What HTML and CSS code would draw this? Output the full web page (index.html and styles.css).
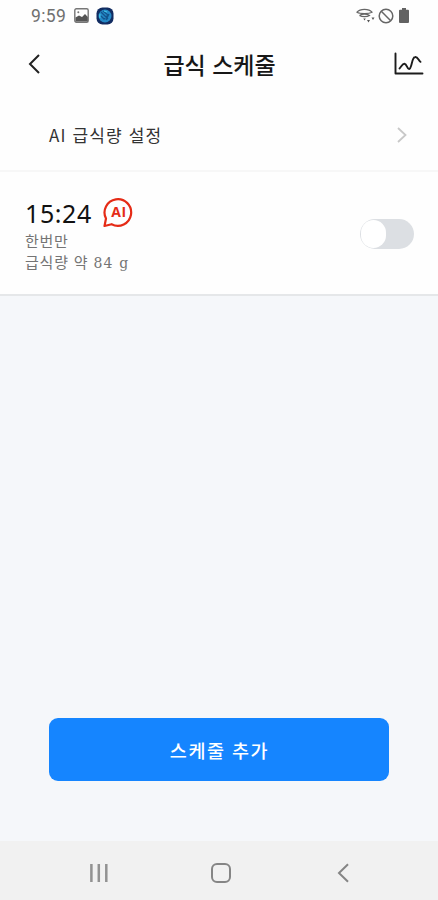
FILE: index.html
```html
<!DOCTYPE html>
<html lang="ko">
<head>
<meta charset="utf-8">
<title>급식 스케줄</title>
<link rel="stylesheet" href="styles.css">
</head>
<body>
<div class="screen">
  <div class="status">
    <span class="clock">9:59</span>
    <svg class="st-photo" width="15" height="15" viewBox="0 0 15 15"><rect x=".8" y=".8" width="13.4" height="13.4" rx="1.5" fill="#fff" stroke="#777" stroke-width="1.4"/><path d="M1.500 13.500V9.500L5 7.500 8 9l3-3 2.800 3v4.500z" fill="#555"/><circle cx="4.300" cy="4.300" r="1" fill="#777"/></svg>
    <svg class="st-app" width="18" height="18" viewBox="0 0 18 18"><rect x=".5" y=".5" width="17" height="17" rx="6" fill="#122c61"/><circle cx="9" cy="9" r="6.500" fill="#2488c6"/><path d="M5 5l7 7M7 4l5 4-4 4-3-3M13 7l-3 6" fill="none" stroke="#12548d" stroke-width="1.300"/><path d="M4 11a5.500 5.500 0 0 1 0-4M8 4l3 1" fill="none" stroke="#42c4e5" stroke-width="1.300"/></svg>
    <span class="grow"></span>
    <svg class="st-wifi" width="20" height="16" viewBox="0 0 20 16" fill="none" stroke="#666" stroke-width="1.200"><path d="M1 4.200C4 .5 13 .5 16 4.200C13 6 4 6 1 4.200zM3.500 7.500c2.500-1.800 7.500-1.800 10 0c-2.500 1.500-7.500 1.500-10 0"/><path d="M7.300 10.500h2.500L8.500 12.500zM11 12l1.500 2.500 1.500-2.500zM15.500 9.500l1.500 2.500 1.500-2.500z" fill="#555" stroke="none"/></svg>
    <svg class="st-block" width="16" height="16" viewBox="0 0 16 16" fill="none" stroke="#666" stroke-width="1.500"><circle cx="8" cy="8" r="6.800"/><path d="M3.300 3.300l9.400 9.400"/></svg>
    <svg class="st-battery" width="10" height="15" viewBox="0 0 10 15"><path d="M3 0h4v1.700h2q1 0 1 1V14q0 1-1 1H1q-1 0-1-1V2.700q0-1 1-1h2z" fill="#626262"/></svg>
  </div>
  <header class="header">
    <svg width="12" height="20" viewBox="0 0 12 20" fill="none" stroke="#222" stroke-width="2"><path d="M11 1L2 10l9 9"/></svg>
    <h1 class="title">급식 스케줄</h1>
    <svg width="30" height="23" viewBox="0 0 30 23" fill="none" stroke="#1c1c1c" stroke-width="1.900" stroke-linecap="round" stroke-linejoin="round"><path d="M1.500 1.500V21.500H28.500"/><path d="M5.500 16.500C7 15.200 8.500 11.500 10.500 11.700C13 12 13 17 15 17C18 17 17.500 5.500 21 5C24 4.500 24.500 9 26.500 9.800"/></svg>
  </header>
  <div class="setting">
    <span class="setting-label">AI 급식량 설정</span>
    <svg width="10" height="16" viewBox="0 0 10 16" fill="none" stroke="#c8c8c8" stroke-width="1.800"><path d="M1 1l7.500 7L1 15"/></svg>
  </div>
  <section class="schedule">
    <div>
      <div class="time-row">
        <span class="time">15:24</span>
        <span class="badge"><svg class="bubble" width="30" height="30" viewBox="0 0 30 30" fill="none" stroke="#e52b16" stroke-width="2.200" stroke-linejoin="round"><path d="M3 20.500A13.300 13.300 0 1 1 8.600 26.200L1.500 28z"/></svg><span class="badge-text">AI</span></span>
      </div>
      <div class="repeat">한번만</div>
      <div class="amount">급식량 약 <span class="latin">84 g</span></div>
    </div>
    <span class="toggle"><span class="knob"></span></span>
  </section>
  <main class="content"><button class="add">스케줄 추가</button></main>
  <nav class="nav">
    <svg width="20" height="20" viewBox="0 0 20 20" stroke="#929292" stroke-width="2.500"><path d="M2.400 1v18M9.800 1v18M17.300 1v18"/></svg>
    <svg class="home" width="20" height="20" viewBox="0 0 20 20" fill="none" stroke="#858585" stroke-width="2"><rect x="1" y="1" width="18" height="18" rx="5"/></svg>
    <svg width="12" height="20" viewBox="0 0 12 20" fill="none" stroke="#858585" stroke-width="2"><path d="M11 1.200L2 10l9 8.800"/></svg>
  </nav>
</div>
</body>
</html>
```
FILE: styles.css
```css
* { box-sizing: border-box; }
body { margin: 0; font-family: "Noto Sans CJK KR", sans-serif; background: #fff; }
svg { display: block; flex: none; }
.screen { width: 438px; height: 900px; display: flex; flex-direction: column; background: #fefefe; overflow: hidden; }
.status { height: 30px; padding: 1px 29px 0 31px; display: flex; align-items: center; }
.clock { width: 36px; font: 17.500px/20px Roboto, sans-serif; color: #707070; letter-spacing: .4px; white-space: nowrap; }
.st-photo { margin-left: 7px; }
.st-app { margin-left: 7px; }
.grow { flex: 1; }
.st-block { margin-left: 2px; }
.st-battery { margin-left: 5px; }
.header { height: 70px; padding: 0 14px 3px 28px; display: flex; align-items: center; justify-content: space-between; }
.title { margin: 0 0 0 5px; font-size: 23px; line-height: 32px; font-weight: 500; color: #171717; letter-spacing: 0; }
.setting { height: 72px; padding: 0 31px 1px 49px; border-bottom: 2px solid #f7f7f7; display: flex; align-items: center; justify-content: space-between; }
.setting-label { font-size: 17px; line-height: 24px; color: #333; letter-spacing: 1.150px; }
.schedule { height: 124px; padding: 26px 24px 0 25px; border-bottom: 2px solid #e5e7e9; display: flex; justify-content: space-between; }
.time-row { height: 33px; display: flex; gap: 12px; }
.time { width: 66px; font: 25px/30px "Noto Sans", sans-serif; color: #111; letter-spacing: .6px; white-space: nowrap; }
.badge { position: relative; width: 30px; height: 30px; }
.badge-text { position: absolute; left: 1px; top: 0; width: 30px; text-align: center; font: bold 14px/28px "Open Sans", sans-serif; letter-spacing: .5px; color: #e52b16; }
.repeat, .amount { font-size: 15px; line-height: 22px; color: #747474; }
.repeat { line-height: 20px; letter-spacing: .7px; }
.amount { letter-spacing: .8px; }
.latin { font: 14px/20px "DejaVu Serif", serif; letter-spacing: 1.200px; }
.toggle { width: 54px; height: 30px; margin-top: 21px; padding: 1px; border-radius: 15px; background: #dcdfe3; }
.knob { display: block; width: 25px; height: 28px; border-radius: 14px; background: #fff; }
.content { flex: 1; padding: 422px 49px 0; background: #f5f7fa; }
.add { display: block; width: 340px; height: 63px; padding: 0 0 0 1px; border: 0; border-radius: 9px; background: #1585ff; color: #fff; font: 500 18.500px/24px "Noto Sans CJK KR", sans-serif; letter-spacing: 1.500px; }
.nav { height: 59px; padding: 4px 89px 0 89px; display: flex; align-items: center; justify-content: space-between; background: #f1f1f1; }
.home { margin-right: 4px; }
```
